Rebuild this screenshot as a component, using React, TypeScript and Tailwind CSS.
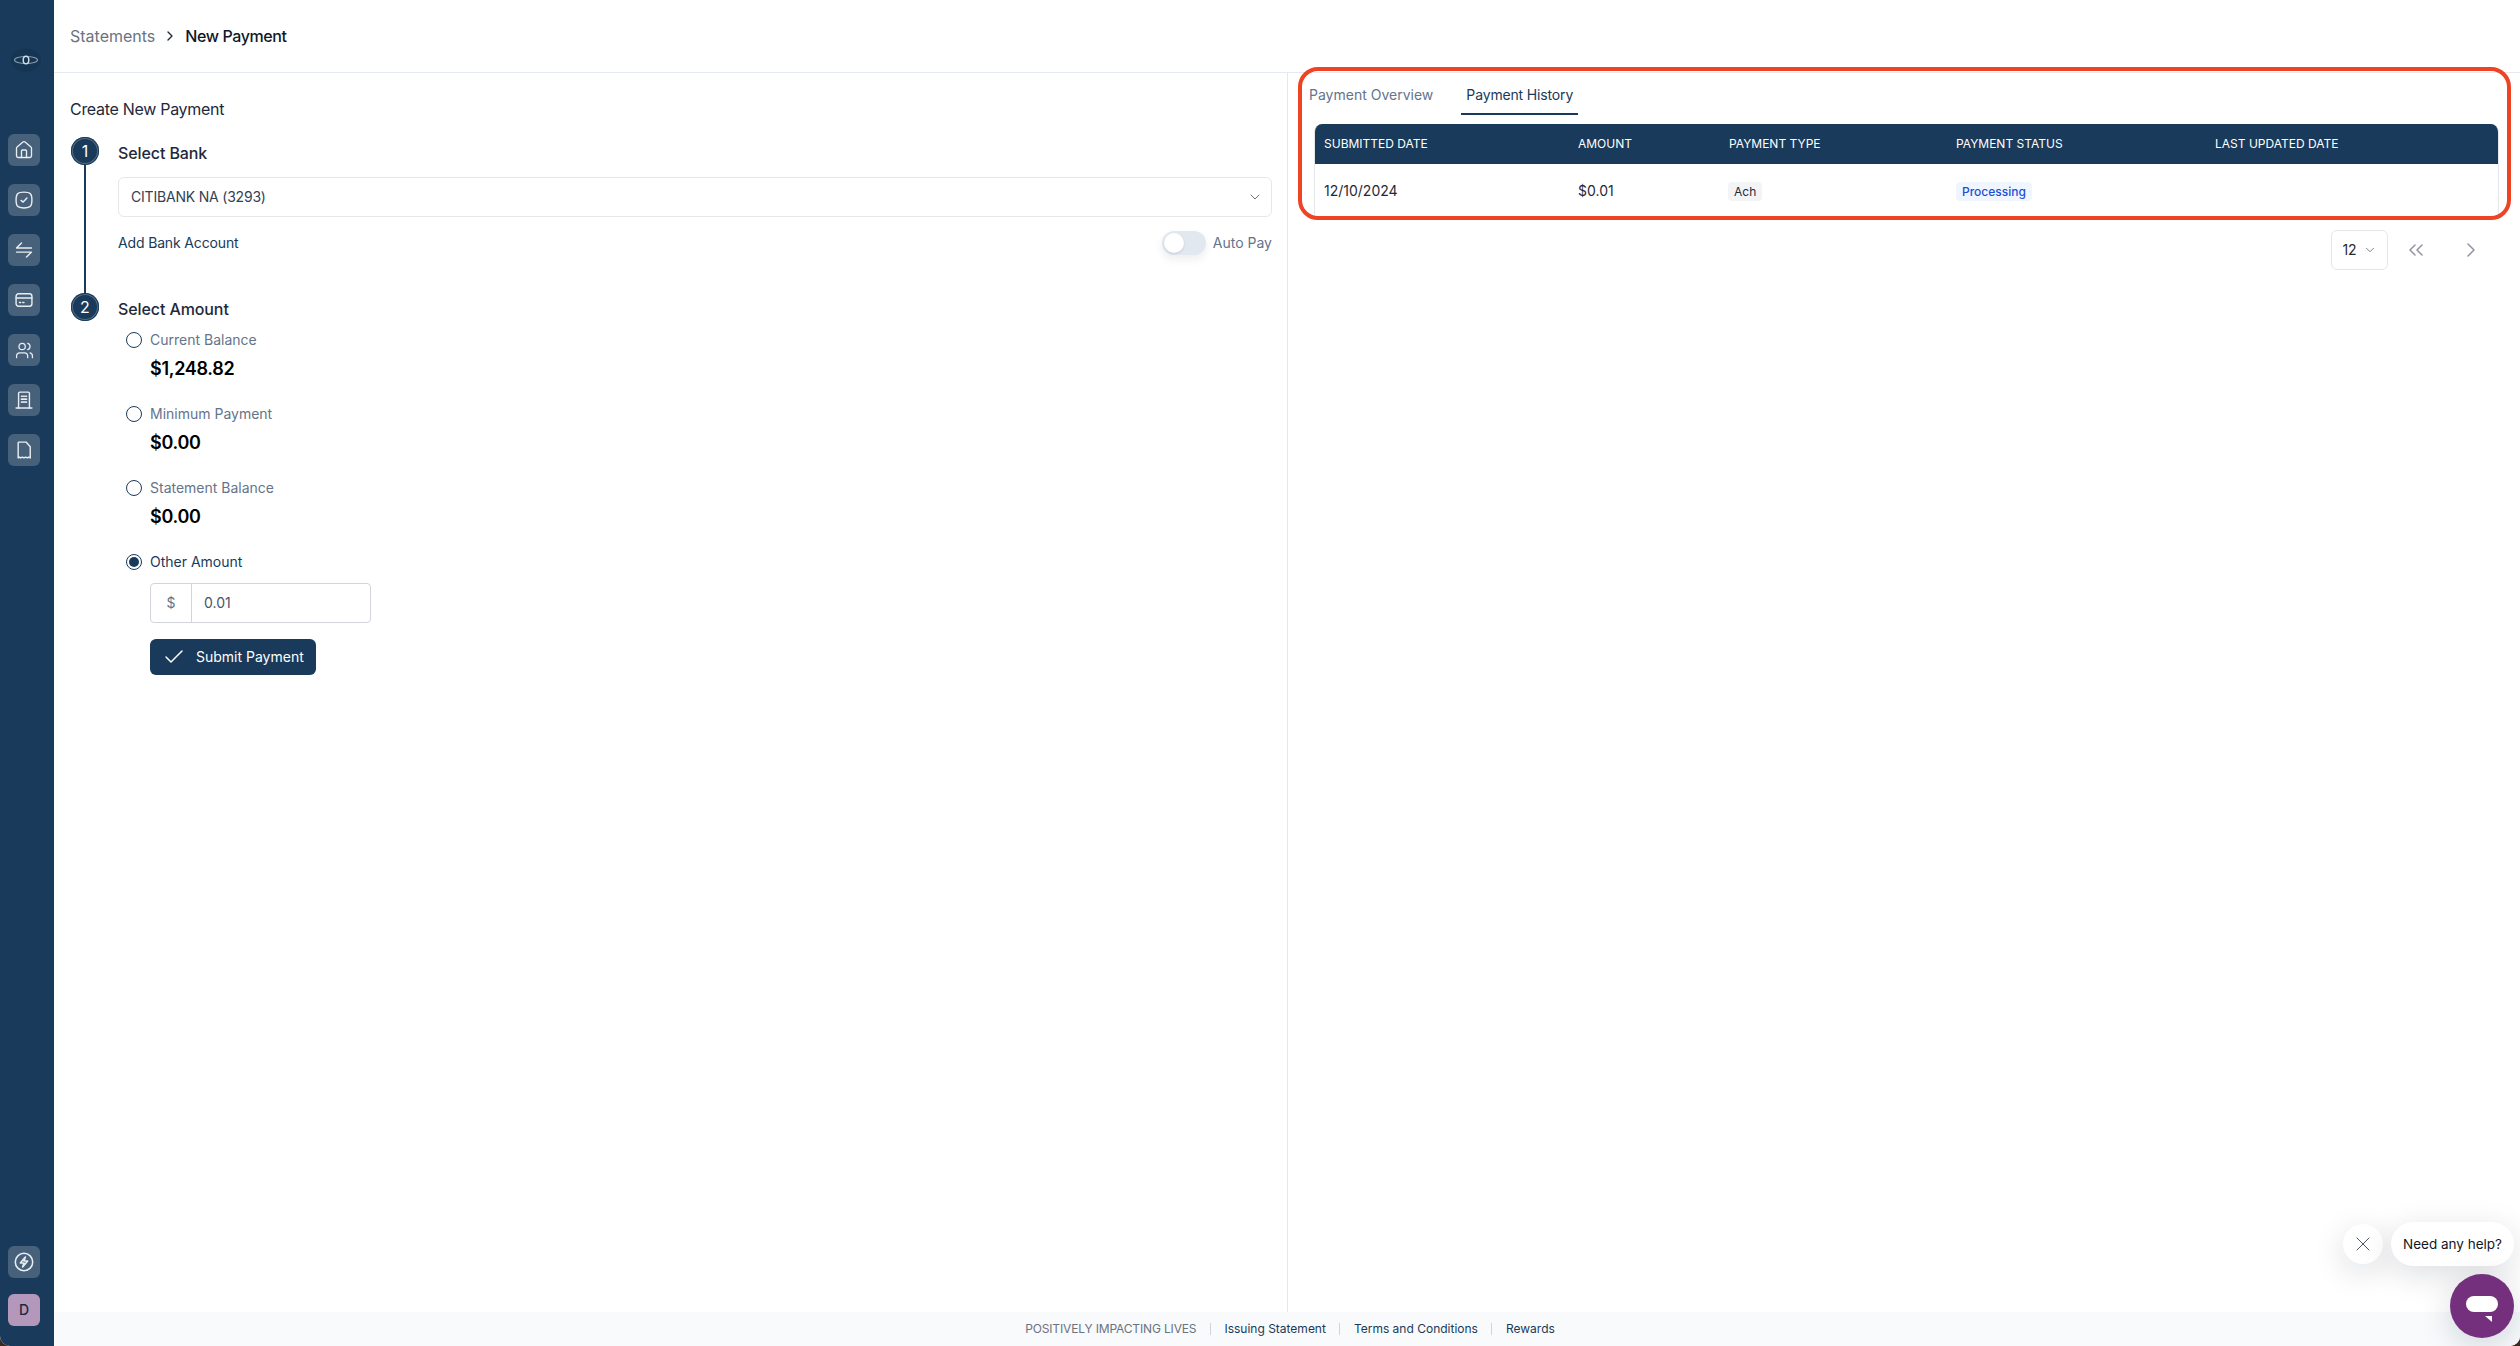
import React from 'react';
import { Check, ChevronDown, ChevronRight, ChevronsLeft, ChevronRight as Sep, House, Users, X } from 'lucide-react';

const iconStyle = {
  fill: 'none',
  stroke: 'currentColor',
  strokeWidth: 1.7,
  strokeLinecap: 'round' as const,
  strokeLinejoin: 'round' as const,
};

const SquircleCheck = () => (
  <svg width="20" height="20" viewBox="0 0 24 24" {...iconStyle}>
    <path d="M12 2.500c7.600 0 9.500 1.900 9.500 9.500s-1.900 9.500-9.500 9.500-9.500-1.900-9.500-9.500 1.900-9.500 9.500-9.500z" />
    <path d="m8.500 12.500 2.500 2 4.500-5" />
  </svg>
);

const Transfer = () => (
  <svg width="20" height="20" viewBox="0 0 24 24" {...iconStyle}>
    <path d="M21 9.500H3l6-6" />
    <path d="M3 14.500h18l-6 6" />
  </svg>
);

const Card = () => (
  <svg width="20" height="20" viewBox="0 0 24 24" {...iconStyle}>
    <rect x="2.500" y="4.500" width="19" height="15" rx="3" />
    <path d="M2.500 9.500h19" />
    <path d="M6.500 15h1.500M10.500 15h1.500" />
  </svg>
);

const Building = () => (
  <svg width="20" height="20" viewBox="0 0 24 24" {...iconStyle}>
    <path d="M2.500 21.500h19" />
    <path d="M5.500 21.500V4A1.500 1.500 0 0 1 7 2.500h10A1.500 1.500 0 0 1 18.500 4v17.500" />
    <path d="M9 7.500h1M11.500 7.500h1M14 7.500h1M9 11h1M11.500 11h1M14 11h1M9 14.500h1M11.500 14.500h1M14 14.500h1" strokeWidth={2} />
  </svg>
);

const Receipt = () => (
  <svg width="20" height="20" viewBox="0 0 24 24" {...iconStyle}>
    <path d="M6 2.500h8.500l5 5.500v13.500l-1.800-1-1.700 1-2-1-2 1-2-1-2 1-1.700-1-1.300 1V3.500a1 1 0 0 1 1-1z" />
  </svg>
);

const Bolt = () => (
  <svg width="22" height="22" viewBox="0 0 24 24" {...iconStyle}>
    <circle cx="12" cy="12" r="9.500" />
    <path d="M13.500 6.500 8 13h4l-1.500 4.500L16 11h-4z" />
  </svg>
);

const Logo = () => (
  <svg width="32" height="24" viewBox="0 0 32 24" fill="none">
    <ellipse cx="16" cy="12" rx="15" ry="11.500" fill="#163553" />
    <ellipse cx="16" cy="12" rx="11.500" ry="3.500" stroke="#8399ad" strokeWidth="1.100" />
    <ellipse cx="16" cy="12" rx="2.800" ry="3.800" stroke="#d5dee6" strokeWidth="1.400" />
  </svg>
);

const navItems = [
  <House key="home" size={20} strokeWidth={1.6} />,
  <SquircleCheck key="check" />,
  <Transfer key="transfer" />,
  <Card key="card" />,
  <Users key="users" size={19} strokeWidth={1.6} />,
  <Building key="building" />,
  <Receipt key="receipt" />,
];

const amounts = [
  { label: 'Current Balance', value: '$1,248.82' },
  { label: 'Minimum Payment', value: '$0.00' },
  { label: 'Statement Balance', value: '$0.00' },
];

const columns = ['Submitted Date', 'Amount', 'Payment Type', 'Payment Status', 'Last Updated Date'];

const NavButton = ({ children }: { children: React.ReactNode }) => (
  <button className="flex h-8 w-8 items-center justify-center rounded-md bg-white/20 text-[#e8edf2]">{children}</button>
);

const StepBadge = ({ n }: { n: number }) => (
  <div className="flex h-7 w-7 shrink-0 items-center justify-center rounded-full bg-[#193a5a] text-base text-white shadow-[inset_0_0_0_1px_#193a5a,inset_0_0_0_2px_rgba(255,255,255,0.25)]">
    {n}
  </div>
);

const Radio = ({ checked }: { checked?: boolean }) => (
  <span className="flex h-4 w-4 shrink-0 items-center justify-center rounded-full border border-[#193a5a] bg-white">
    {checked && <span className="h-2.5 w-2.5 rounded-full bg-[#193a5a]" />}
  </span>
);

export default function App() {
  return (
    <div className="h-[1346px] w-full bg-[#3a2a22] font-['Inter',sans-serif] text-[#0f172a]">
      <div className="relative flex h-full w-full overflow-hidden rounded-b-[10px] bg-white">
        {/* Sidebar */}
        <aside className="flex w-[54px] shrink-0 flex-col items-start bg-[#193a5a] pb-5 pl-2">
          <div className="mt-9 flex h-12 w-[36px] items-center justify-center">
            <Logo />
          </div>
          <nav className="mt-[50px] flex flex-col gap-[18px]">
            {navItems.map((icon, i) => (
              <NavButton key={i}>{icon}</NavButton>
            ))}
          </nav>
          <div className="mt-auto flex flex-col gap-4">
            <NavButton>
              <Bolt />
            </NavButton>
            <div className="flex h-8 w-8 items-center justify-center rounded-md bg-[#b498bc] text-sm font-medium text-[#1e293b]">D</div>
          </div>
        </aside>

        <div className="flex min-w-0 flex-1 flex-col">
          {/* Breadcrumb */}
          <header className="flex h-[73px] shrink-0 items-center border-b border-[#e5e9f0] pl-4">
            <span className="text-base text-[#6b7280]">Statements</span>
            <Sep size={16} className="mx-[7px] text-[#1f2937]" />
            <span className="text-base font-medium tracking-[-0.4px] text-[#111827]">New Payment</span>
          </header>

          <div className="flex min-h-0 flex-1">
            {/* Left panel */}
            <section className="w-[1234px] shrink-0 border-r border-[#e5e7eb] pl-4 pr-[15px] pt-6">
              <h2 className="text-base leading-6 tracking-[-0.3px] text-[#1e293b]">Create New Payment</h2>

              <div className="mt-4 flex h-[156px] gap-[19px] pl-px">
                <div className="flex w-7 flex-col items-center">
                  <StepBadge n={1} />
                  <div className="w-0.5 flex-1 bg-[#193a5a]" />
                </div>
                <div className="min-w-0 flex-1 pt-1">
                  <h3 className="text-base leading-6 font-medium tracking-[-0.1px] text-[#1e293b]">Select Bank</h3>
                  <div className="mt-3 flex h-10 items-center justify-between rounded-md border border-[#e5e7eb] pl-3 pr-2">
                    <span className="text-sm tracking-[-0.2px] text-[#334155]">CITIBANK NA (3293)</span>
                    <ChevronDown size={16} strokeWidth={1.5} className="text-[#6b7280]" />
                  </div>
                  <div className="mt-3.5 flex h-6 items-center justify-between">
                    <a className="text-sm tracking-[-0.15px] text-[#193a5a]">Add Bank Account</a>
                    <div className="flex items-center gap-[7px]">
                      <span className="flex h-6 w-11 items-center rounded-full bg-[#e2e8f0] p-0.5 shadow-[0_4px_8px_rgba(15,23,42,0.08)]">
                        <span className="h-5 w-5 rounded-full bg-white shadow" />
                      </span>
                      <span className="text-sm text-[#64748b]">Auto Pay</span>
                    </div>
                  </div>
                </div>
              </div>

              <div className="flex gap-[19px] pl-px">
                <StepBadge n={2} />
                <div className="min-w-0 flex-1 pt-1">
                  <h3 className="text-base leading-6 font-medium tracking-[-0.1px] text-[#1e293b]">Select Amount</h3>
                  <div className="ml-2 mt-[9px] flex flex-col gap-[21px]">
                    {amounts.map((a) => (
                      <div key={a.label}>
                        <label className="flex h-5 items-center gap-2 text-sm text-[#64748b]">
                          <Radio />
                          {a.label}
                        </label>
                        <p className="ml-6 mt-[5px] text-lg leading-7 font-semibold tracking-[-0.3px] text-black">{a.value}</p>
                      </div>
                    ))}
                    <div>
                      <label className="flex h-5 items-center gap-2 text-sm text-[#193a5a]">
                        <Radio checked />
                        Other Amount
                      </label>
                      <div className="ml-6 mt-[11px] flex h-10 w-[221px] items-center rounded border border-[#d1d5db] text-sm">
                        <span className="flex h-full w-[41px] items-center justify-center border-r border-[#d1d5db] text-[#64748b]">$</span>
                        <span className="pl-3 text-[#475569]">0.01</span>
                      </div>
                      <button className="ml-6 mt-4 flex h-9 w-[166px] items-center rounded-md bg-[#193a5a] pl-3 text-sm text-white">
                        <Check size={24} strokeWidth={1.5} />
                        <span className="ml-[10px]">Submit Payment</span>
                      </button>
                    </div>
                  </div>
                </div>
              </div>
            </section>

            {/* Right panel */}
            <section className="relative min-w-0 flex-1 pl-[26px] pr-[21px]">
              <div className="absolute -top-1.5 left-[10px] right-[9px] h-[153px] rounded-[20px] border-4 border-[#ee4423]" />
              <div className="-ml-[9px] flex h-[42px] items-end gap-6">
                <div className="flex h-[34px] items-start px-1 pt-1 text-sm leading-5 text-[#64748b]">Payment Overview</div>
                <div className="flex h-[34px] w-[117px] items-start justify-center border-b-2 border-[#193a5a] pt-1 text-sm leading-5 tracking-[-0.15px] text-[#193a5a]">Payment History</div>
              </div>

              <div className="mt-[9px] overflow-hidden rounded-t-lg border-x border-[#e5e7eb]">
                <div className="grid h-10 grid-cols-[254px_151px_227px_259px_1fr] items-center bg-[#193a5a] pl-[9px] text-xs text-white uppercase">
                  {columns.map((c) => (
                    <span key={c}>{c}</span>
                  ))}
                </div>
                <div className="grid h-[54px] grid-cols-[254px_151px_227px_259px_1fr] items-center pl-[9px] text-sm text-[#1f2937]">
                  <span>12/10/2024</span>
                  <span>$0.01</span>
                  <span>
                    <span className="-ml-px inline-block rounded bg-[#f3f4f6] px-[6px] text-xs leading-[19px]">Ach</span>
                  </span>
                  <span>
                    <span className="inline-block rounded bg-[#eff6ff] px-[6px] text-xs leading-[19px] font-medium text-[#1d4ed8]">Processing</span>
                  </span>
                  <span />
                </div>
              </div>

              <div className="mr-2 mt-3 flex items-center justify-end">
                <div className="flex h-10 w-[57px] items-center justify-center gap-1.5 rounded-md border border-[#e5e7eb] text-sm text-[#1f2937]">
                  12
                  <ChevronDown size={14} strokeWidth={1.5} className="text-[#6b7280]" />
                </div>
                <button className="ml-2 flex h-10 w-10 items-center justify-center text-[#8f949e]">
                  <ChevronsLeft size={24} strokeWidth={1.5} />
                </button>
                <button className="ml-[15px] flex h-10 w-10 items-center justify-center text-[#8f949e]">
                  <ChevronRight size={24} strokeWidth={1.5} />
                </button>
              </div>
            </section>
          </div>

          {/* Footer */}
          <footer className="flex h-[34px] shrink-0 items-center justify-center bg-[#f8fafc] pl-1.5 text-xs">
            <span className="tracking-[-0.15px] text-[#6b7280] uppercase">Positively Impacting Lives</span>
            <span className="mx-[13.5px] h-3 w-px bg-[#d1d5db]" />
            <span className="text-[#193a5a]">Issuing Statement</span>
            <span className="mx-[13.5px] h-3 w-px bg-[#d1d5db]" />
            <span className="text-[#193a5a]">Terms and Conditions</span>
            <span className="mx-[13.5px] h-3 w-px bg-[#d1d5db]" />
            <span className="text-[#193a5a]">Rewards</span>
          </footer>
        </div>

        {/* Chat widget */}
        <div className="absolute bottom-2 right-1.5 flex flex-col items-end gap-2">
          <div className="flex items-center gap-2">
            <button className="flex h-10 w-10 items-center justify-center rounded-full bg-white text-[#4b5563] shadow-[0_8px_32px_rgba(15,23,42,0.14)]">
              <X size={24} strokeWidth={1} />
            </button>
            <div className="flex h-11 w-[123px] items-center justify-center rounded-[22px] bg-white text-[13.5px] text-[#111827] shadow-[0_8px_32px_rgba(15,23,42,0.14)]">Need any help?</div>
          </div>
          <button className="relative h-16 w-16 rounded-full bg-[#742f7d] shadow-[0_8px_32px_rgba(15,23,42,0.16)]">
            <span className="absolute left-4 top-[22px] h-4 w-8 rounded-lg bg-white" />
            <svg className="absolute left-[35px] top-[42px]" width="7" height="6" viewBox="0 0 7 6">
              <path d="M0 0h7v6z" fill="#fff" />
            </svg>
          </button>
        </div>
      </div>
    </div>
  );
}
